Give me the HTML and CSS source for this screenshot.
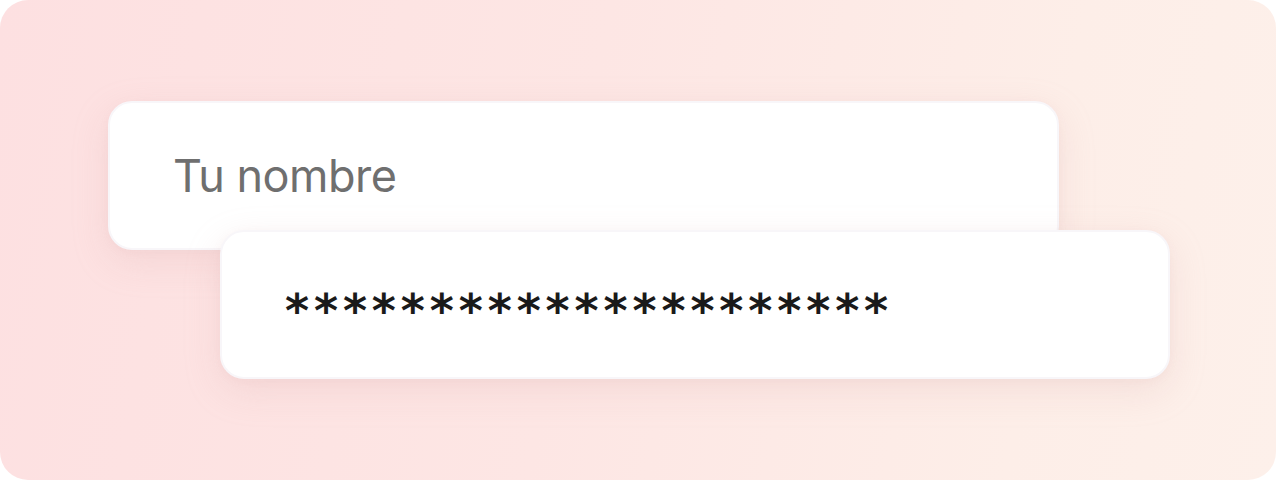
FILE: index.html
```html
<!DOCTYPE html>
<html lang="es">
<head>
<meta charset="utf-8">
<link rel="stylesheet" href="styles.css">
</head>
<body>
<div class="card">
  <div class="fields">
    <div class="field field-name"><span class="placeholder">Tu nombre</span></div>
    <div class="field field-pass"><span class="secret">*********************</span></div>
  </div>
</div>
</body>
</html>
```
FILE: styles.css
```css
html, body {
  margin: 0;
  padding: 0;
  background: #ffffff;
}
.card {
  width: 1276px;
  height: 480px;
  box-sizing: border-box;
  border-radius: 28px;
  background: linear-gradient(100deg, #fde0e1 0%, #fde6e4 45%, #fdeee8 80%, #fdf0ea 100%);
  padding-top: 101px;
  padding-left: 108px;
  overflow: hidden;
}
.fields {
  display: flex;
  flex-direction: column;
  align-items: flex-start;
}
.field {
  box-sizing: border-box;
  width: 951px;
  height: 149px;
  border-radius: 24px;
  background: #ffffff;
  border: 2px solid #f8f6f9;
  box-shadow: 0 12px 36px rgba(214, 170, 168, 0.22), 0 2px 8px rgba(214, 170, 168, 0.08);
  display: flex;
  align-items: center;
  padding-left: 63px;
}
.field-pass {
  margin-top: -20px;
  margin-left: 112px;
  width: 950px;
  position: relative;
}
.placeholder {
  font-family: Inter, "Noto Sans", sans-serif;
  font-size: 45px;
  color: #6f6f6f;
  letter-spacing: -0.5px;
  line-height: 1;
}
.secret {
  font-family: "DejaVu Sans", sans-serif;
  font-weight: bold;
  font-size: 46px;
  color: #1a1a1a;
  letter-spacing: 4.9px;
  line-height: 1;
  padding-top: 12px;
}
```
